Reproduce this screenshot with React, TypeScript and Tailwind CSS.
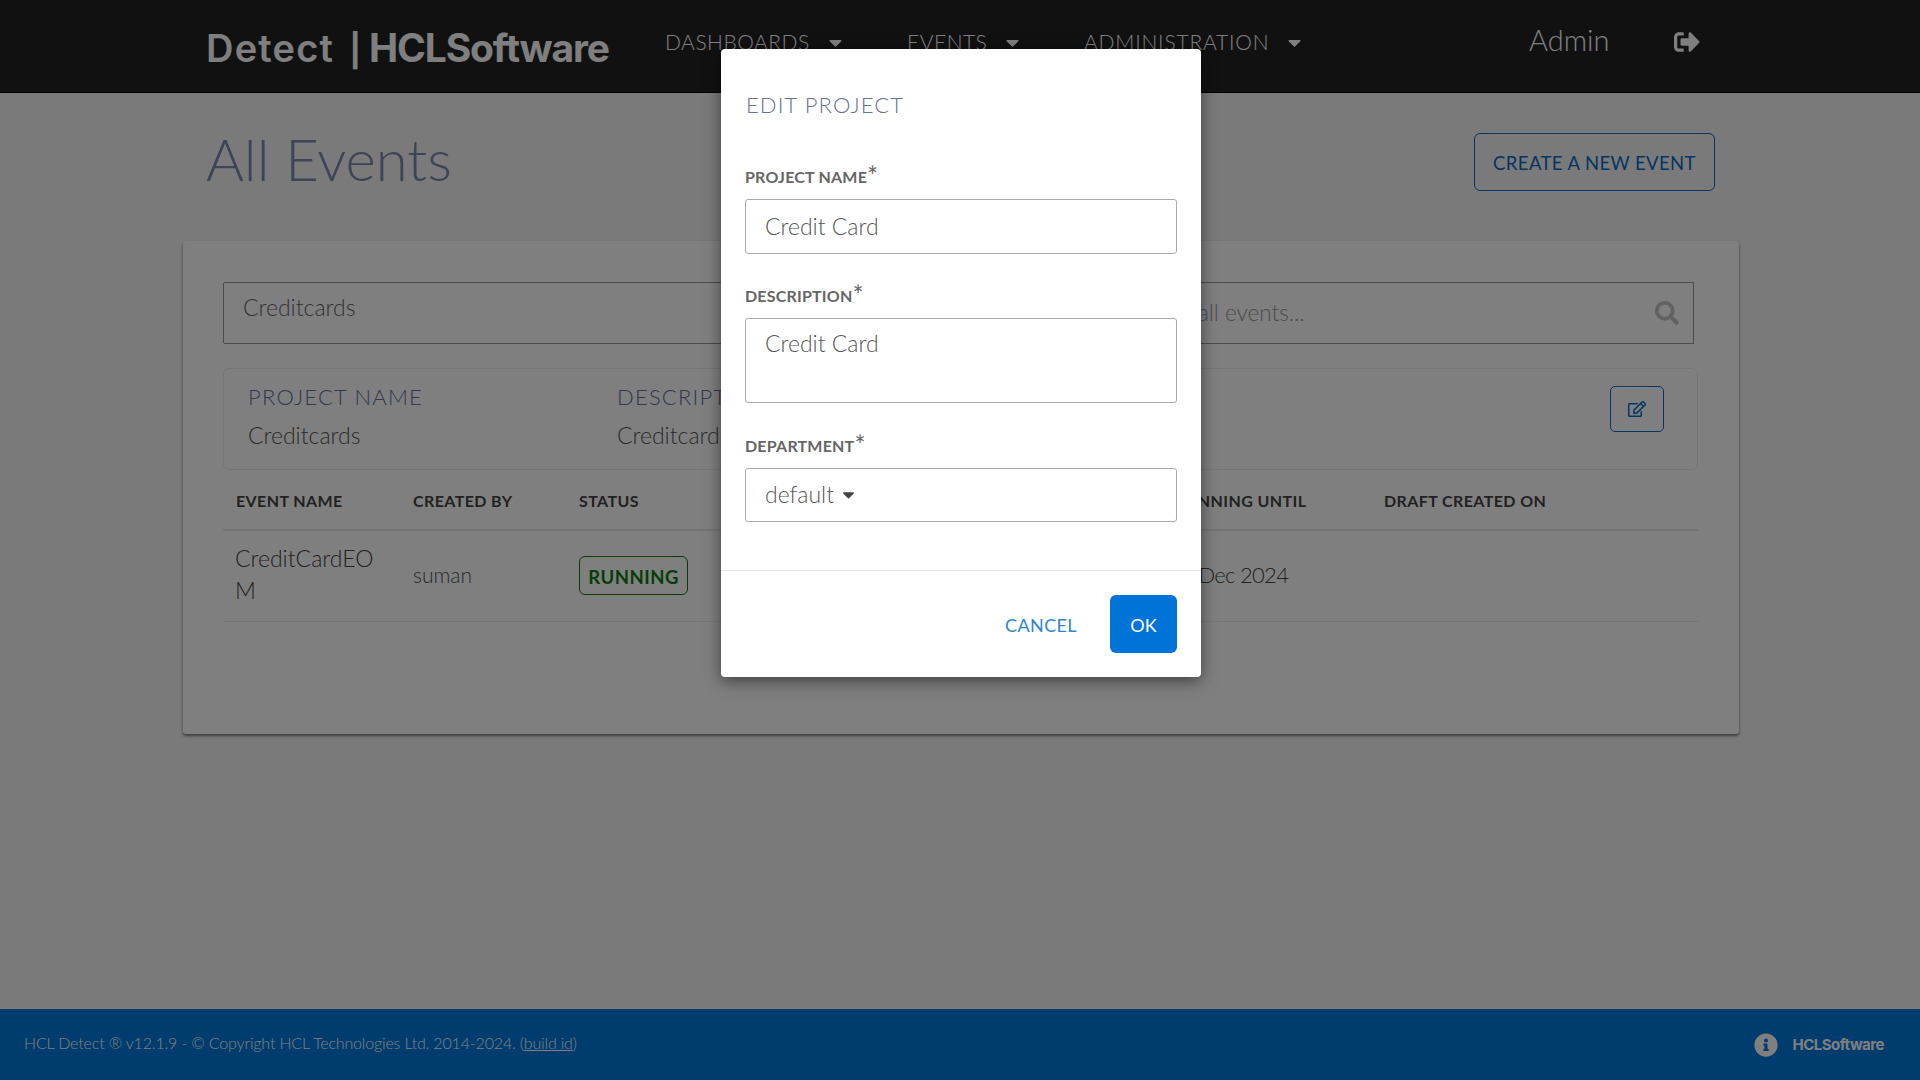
import { FaCaretDown, FaInfoCircle, FaRegEdit, FaSearch, FaSignOutAlt } from "react-icons/fa";

const lato = "font-['Lato','Liberation_Sans',sans-serif]";

function NavItem({ label, className, labelClass }: { label: string; className: string; labelClass: string }) {
  return (
    <div className={`flex h-[30px] items-center ${className}`}>
      <span className={`text-[21px] font-light text-white ${labelClass}`}>{label}</span>
      <FaCaretDown className="ml-[15px] text-[21px] text-white" />
    </div>
  );
}

function Field({ label, children }: { label: string; children: React.ReactNode }) {
  return (
    <div>
      <label className="-mt-[4px] mb-[13px] block h-[26px] text-[16px] leading-[19px] font-bold tracking-[0.2px] text-[#666]">
        {label}
        <sup className="top-[3px] text-[26px] leading-none font-normal">*</sup>
      </label>
      {children}
    </div>
  );
}

export default function App() {
  return (
    <div className={`${lato} relative flex min-h-screen flex-col bg-[#f4f4f4]`}>
      {/* Header */}
      <header className="flex h-[93px] items-start border-b border-black bg-[#222222] pl-[206px]">
        <div className="mt-[27px] flex w-[459px] items-baseline whitespace-nowrap font-['Inter',sans-serif] text-white">
          <span className="text-[38px] leading-[42px] font-semibold tracking-[1.2px]">Detect</span>
          <span className="ml-[15px] text-[32px] leading-[42px] font-bold">|</span>
          <span className="ml-[8px] text-[39px] leading-[42px] font-bold tracking-[-1.15px]">HCLSoftware</span>
        </div>
        <div className="mt-[27px] flex">
          <NavItem label="DASHBOARDS" className="w-[242px]" labelClass="tracking-[0.5px]" />
          <NavItem label="EVENTS" className="w-[177px]" labelClass="tracking-[0.5px]" />
          <NavItem label="ADMINISTRATION" className="w-[445px]" labelClass="tracking-[0.8px]" />
          <span className="-mt-[5px] w-[145px] text-[29px] leading-[36px] font-light text-white">Admin</span>
          <FaSignOutAlt className="mt-[2px] text-[26px] text-white" />
        </div>
      </header>

      {/* Main */}
      <main className="ml-[183px] w-[1556px] flex-1">
        <div className="flex h-[148px] items-start justify-between px-[23px]">
          <h1 className="mt-[27px] text-[58px] leading-[77px] font-light text-[#7a88b0]">All Events</h1>
          <button className="mt-[40px] mr-px h-[58px] w-[241px] rounded-[6px] border border-[#0a6bc4] pt-[3px] text-[18.5px] tracking-[0.4px] text-[#0a6bc4]">
            CREATE A NEW EVENT
          </button>
        </div>

        <section className="h-[493px] rounded-[3px] bg-white px-[40px] pt-[41px] shadow-[0_2px_3px_rgba(0,0,0,0.5)]">
          <div className="flex gap-[10px]">
            <div className="h-[62px] w-[879px] rounded-[2px] border border-[#999] px-[19px] py-[9px] text-[23px] leading-[30px] font-light text-[#666]">
              Creditcards
            </div>
            <div className="flex h-[62px] w-[582px] items-center justify-between border border-[#999] pr-[14px] pl-[14px] text-[22.5px] font-light text-[#999]">
              Search all events...
              <FaSearch className="text-[24px] text-[#c4c4c4]" />
            </div>
          </div>

          <div className="relative mt-[24px] flex h-[102px] w-[1475px] rounded-[6px] border border-[#ededed] pt-[13px] pl-[24px]">
            <div className="w-[369px]">
              <div className="text-[22px] leading-[30px] font-light tracking-[1.2px] text-[#667099]">PROJECT NAME</div>
              <div className="mt-[8px] text-[23px] leading-[30px] font-light text-[#555]">Creditcards</div>
            </div>
            <div>
              <div className="text-[22px] leading-[30px] font-light tracking-[1.2px] text-[#667099]">DESCRIPTION</div>
              <div className="mt-[8px] text-[23px] leading-[30px] font-light text-[#555]">Creditcards</div>
            </div>
            <button className="absolute top-[17px] right-[33px] grid h-[46px] w-[54px] place-items-center rounded-[5px] border border-[#0a6bc4] text-[#0a6bc4]">
              <FaRegEdit className="text-[18px]" />
            </button>
          </div>

          <table className="w-[1475px] table-fixed border-collapse text-left">
            <thead>
              <tr className="h-[60px] border-b-2 border-[#e8e8e8] text-[16px] tracking-[0.4px] text-[#444]">
                <th className="w-[177px] pt-[2px] pl-[13px] font-bold">EVENT NAME</th>
                <th className="w-[166px] pt-[2px] pl-[13px] font-bold">CREATED BY</th>
                <th className="w-[596px] pt-[2px] pl-[13px] font-bold">STATUS</th>
                <th className="w-[209px] pt-[2px] pl-[13px] font-bold">RUNNING UNTIL</th>
                <th className="pt-[2px] pl-[13px] font-bold">DRAFT CREATED ON</th>
              </tr>
            </thead>
            <tbody>
              <tr className="h-[91px] border-b border-[#ededed] text-[23px] leading-[32px] font-light text-[#444]">
                <td className="pr-[20px] pb-[3px] pl-[12px] break-all">CreditCardEOM</td>
                <td className="pb-[2px] pl-[13px] text-[21px] text-[#555]">suman</td>
                <td className="pl-[13px]">
                  <span className="inline-flex h-[39px] w-[109px] items-center justify-center rounded-[6px] border border-[#0a7c0a] pt-[2px] text-[18.5px] font-bold tracking-[0.5px] text-[#0f7a0f]">
                    RUNNING
                  </span>
                </td>
                <td className="pb-[2px] pl-[7px] text-[22px] tracking-[-0.7px]">31 Dec 2024</td>
                <td />
              </tr>
            </tbody>
          </table>
        </section>
      </main>

      {/* Footer */}
      <footer className="flex h-[71px] items-center justify-between bg-[#0078dc] pr-[36px] pb-[4px] pl-[24px] text-[16px] font-light tracking-[-0.16px] text-white">
        <span>
          HCL Detect ® v12.1.9 - © Copyright HCL Technologies Ltd. 2014-2024. (<u>build id</u>)
        </span>
        <div className="flex items-center">
          <FaInfoCircle className="translate-y-[2px] text-[24px]" />
          <span className="ml-[14px] translate-y-[3px] font-['Inter',sans-serif] text-[15px] font-bold tracking-[-0.5px]">HCLSoftware</span>
        </div>
      </footer>

      {/* Modal */}
      <div className="absolute inset-0 flex justify-center bg-black/50 pt-[49px] pl-[2px]">
        <div className="h-[628px] w-[480px] rounded-[4px] bg-white shadow-[0_4px_16px_rgba(0,0,0,0.5)]">
          <div className="px-[24px] pt-[42px]">
            <h2 className="ml-px text-[22px] leading-[28px] font-light tracking-[1.1px] text-[#667099]">EDIT PROJECT</h2>
            <div className="mt-[45px] flex flex-col gap-[29px]">
              <Field label="PROJECT NAME">
                <div className="h-[55px] rounded-[3px] border border-[#aaa] px-[19px] text-[23px] leading-[52px] font-light text-[#555]">
                  Credit Card
                </div>
              </Field>
              <Field label="DESCRIPTION">
                <div className="h-[85px] rounded-[3px] border border-[#aaa] px-[19px] pt-[8px] text-[23px] leading-[32px] font-light text-[#555]">
                  Credit Card
                </div>
              </Field>
              <div className="mt-px">
                <Field label="DEPARTMENT">
                  <div className="flex h-[54px] items-center rounded-[3px] border border-[#aaa] px-[19px] pb-[2px] text-[23px] font-light text-[#555]">
                    default
                    <FaCaretDown className="ml-[5px] text-[19px] text-[#444]" />
                  </div>
                </Field>
              </div>
            </div>
          </div>
          <div className="mt-[48px] flex items-center justify-end border-t border-[#e5e5e5] px-[24px] pt-[24px]">
            <button className="mr-[33px] pt-[2px] text-[18px] tracking-[0.4px] text-[#2f86d0]">CANCEL</button>
            <button className="h-[58px] w-[67px] rounded-[6px] bg-[#0073d8] pt-[2px] text-[18px] text-white">OK</button>
          </div>
        </div>
      </div>
    </div>
  );
}
